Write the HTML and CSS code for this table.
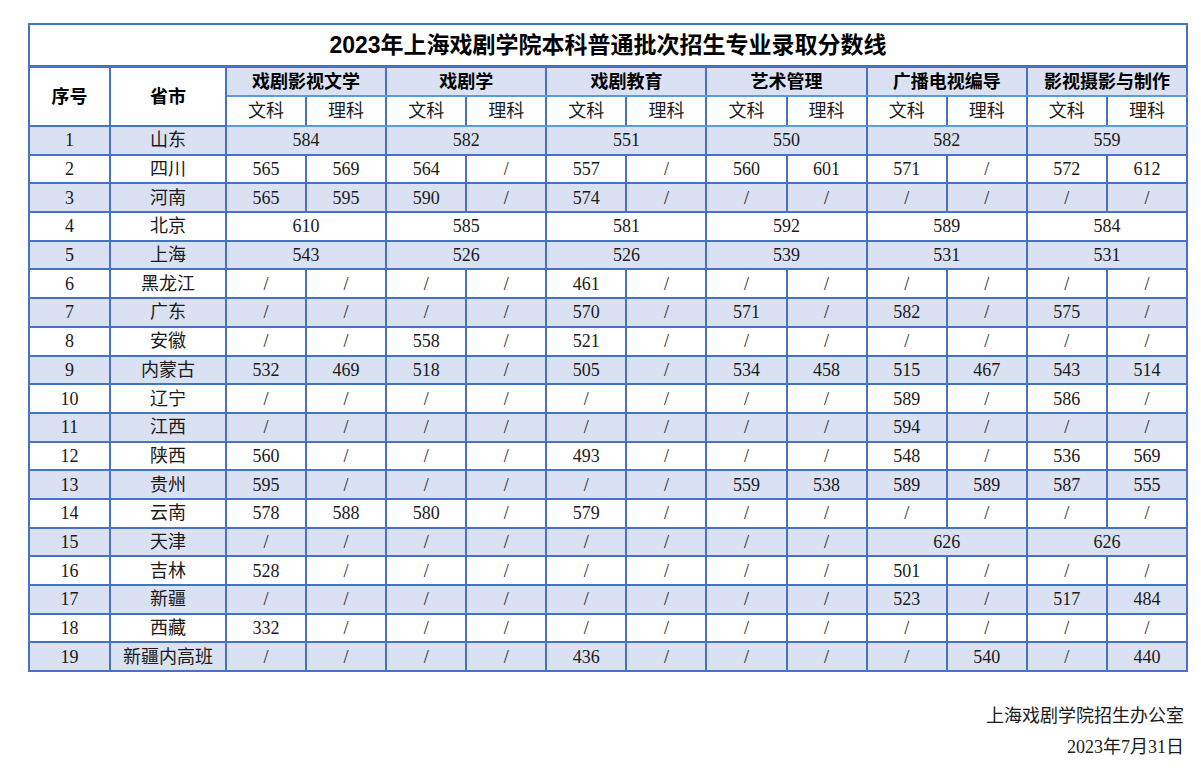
FILE: index.html
```html
<!DOCTYPE html>
<html lang="zh-CN">
<head>
<meta charset="utf-8">
<title>2023年上海戏剧学院本科普通批次招生专业录取分数线</title>
<link rel="stylesheet" href="styles.css">
</head>
<body>
<div class="page">
<table class="scores">
<colgroup>
<col class="c-no"><col class="c-prov">
<col><col><col><col><col><col><col><col><col><col><col><col>
</colgroup>
<thead>
<tr class="title-row"><th colspan="14">2023年上海戏剧学院本科普通批次招生专业录取分数线</th></tr>
<tr class="major-row">
<th rowspan="2" class="key">序号</th><th rowspan="2" class="key">省市</th>
<th colspan="2" class="major">戏剧影视文学</th>
<th colspan="2" class="major">戏剧学</th>
<th colspan="2" class="major">戏剧教育</th>
<th colspan="2" class="major">艺术管理</th>
<th colspan="2" class="major">广播电视编导</th>
<th colspan="2" class="major">影视摄影与制作</th>
</tr>
<tr class="sub-row">
<th>文科</th><th>理科</th><th>文科</th><th>理科</th><th>文科</th><th>理科</th><th>文科</th><th>理科</th><th>文科</th><th>理科</th><th>文科</th><th>理科</th>
</tr>
</thead>
<tbody>
<tr><td>1</td><td>山东</td><td colspan="2">584</td><td colspan="2">582</td><td colspan="2">551</td><td colspan="2">550</td><td colspan="2">582</td><td colspan="2">559</td></tr>
<tr><td>2</td><td>四川</td><td>565</td><td>569</td><td>564</td><td>/</td><td>557</td><td>/</td><td>560</td><td>601</td><td>571</td><td>/</td><td>572</td><td>612</td></tr>
<tr><td>3</td><td>河南</td><td>565</td><td>595</td><td>590</td><td>/</td><td>574</td><td>/</td><td>/</td><td>/</td><td>/</td><td>/</td><td>/</td><td>/</td></tr>
<tr><td>4</td><td>北京</td><td colspan="2">610</td><td colspan="2">585</td><td colspan="2">581</td><td colspan="2">592</td><td colspan="2">589</td><td colspan="2">584</td></tr>
<tr><td>5</td><td>上海</td><td colspan="2">543</td><td colspan="2">526</td><td colspan="2">526</td><td colspan="2">539</td><td colspan="2">531</td><td colspan="2">531</td></tr>
<tr><td>6</td><td>黑龙江</td><td>/</td><td>/</td><td>/</td><td>/</td><td>461</td><td>/</td><td>/</td><td>/</td><td>/</td><td>/</td><td>/</td><td>/</td></tr>
<tr><td>7</td><td>广东</td><td>/</td><td>/</td><td>/</td><td>/</td><td>570</td><td>/</td><td>571</td><td>/</td><td>582</td><td>/</td><td>575</td><td>/</td></tr>
<tr><td>8</td><td>安徽</td><td>/</td><td>/</td><td>558</td><td>/</td><td>521</td><td>/</td><td>/</td><td>/</td><td>/</td><td>/</td><td>/</td><td>/</td></tr>
<tr><td>9</td><td>内蒙古</td><td>532</td><td>469</td><td>518</td><td>/</td><td>505</td><td>/</td><td>534</td><td>458</td><td>515</td><td>467</td><td>543</td><td>514</td></tr>
<tr><td>10</td><td>辽宁</td><td>/</td><td>/</td><td>/</td><td>/</td><td>/</td><td>/</td><td>/</td><td>/</td><td>589</td><td>/</td><td>586</td><td>/</td></tr>
<tr><td>11</td><td>江西</td><td>/</td><td>/</td><td>/</td><td>/</td><td>/</td><td>/</td><td>/</td><td>/</td><td>594</td><td>/</td><td>/</td><td>/</td></tr>
<tr><td>12</td><td>陕西</td><td>560</td><td>/</td><td>/</td><td>/</td><td>493</td><td>/</td><td>/</td><td>/</td><td>548</td><td>/</td><td>536</td><td>569</td></tr>
<tr><td>13</td><td>贵州</td><td>595</td><td>/</td><td>/</td><td>/</td><td>/</td><td>/</td><td>559</td><td>538</td><td>589</td><td>589</td><td>587</td><td>555</td></tr>
<tr><td>14</td><td>云南</td><td>578</td><td>588</td><td>580</td><td>/</td><td>579</td><td>/</td><td>/</td><td>/</td><td>/</td><td>/</td><td>/</td><td>/</td></tr>
<tr><td>15</td><td>天津</td><td>/</td><td>/</td><td>/</td><td>/</td><td>/</td><td>/</td><td>/</td><td>/</td><td colspan="2">626</td><td colspan="2">626</td></tr>
<tr><td>16</td><td>吉林</td><td>528</td><td>/</td><td>/</td><td>/</td><td>/</td><td>/</td><td>/</td><td>/</td><td>501</td><td>/</td><td>/</td><td>/</td></tr>
<tr><td>17</td><td>新疆</td><td>/</td><td>/</td><td>/</td><td>/</td><td>/</td><td>/</td><td>/</td><td>/</td><td>523</td><td>/</td><td>517</td><td>484</td></tr>
<tr><td>18</td><td>西藏</td><td>332</td><td>/</td><td>/</td><td>/</td><td>/</td><td>/</td><td>/</td><td>/</td><td>/</td><td>/</td><td>/</td><td>/</td></tr>
<tr><td>19</td><td>新疆内高班</td><td>/</td><td>/</td><td>/</td><td>/</td><td>436</td><td>/</td><td>/</td><td>/</td><td>/</td><td>540</td><td>/</td><td>440</td></tr>
</tbody>
</table>
<div class="footer">
<div class="footer-line">上海戏剧学院招生办公室</div>
<div class="footer-line">2023年7月31日</div>
</div>
</div>
</body>
</html>
```

FILE: styles.css
```css
html, body {
  margin: 0;
  padding: 0;
  background: #ffffff;
}

body {
  font-family: "Liberation Serif", "Noto Sans CJK SC", serif;
  color: #1a1a1a;
}

.page {
  padding: 23px 0 0 28px;
  width: 1160px;
}

.scores {
  border-collapse: collapse;
  table-layout: fixed;
  width: 1160px;
}

.c-no { width: 81px; }
.c-prov { width: 116px; }

.scores th,
.scores td {
  border: 2px solid #4472c4;
  text-align: center;
  vertical-align: middle;
  padding: 0;
  font-size: 18px;
  font-weight: 400;
  line-height: 20px;
  white-space: nowrap;
  overflow: hidden;
}

.title-row th {
  height: 40px;
  border-bottom-width: 3px;
  font-family: "Liberation Sans", "Noto Sans CJK SC", sans-serif;
  font-weight: 700;
  font-size: 23px;
  color: #000;
}

.major-row th {
  height: 27px;
}

.key,
.major {
  font-family: "Liberation Sans", "Noto Sans CJK SC", sans-serif;
  font-weight: 700 !important;
  color: #000;
}

.major {
  background: #d9e1f2;
  border-bottom-color: #5b9bd5 !important;
}

.sub-row th {
  height: 28px;
  border-bottom-color: #5b9bd5;
}

.scores tbody td {
  height: 26.7px;
}

.scores tbody tr:nth-child(odd) td {
  background: #d9e1f2;
}

.footer {
  width: 1156px;
  margin-top: 29px;
  text-align: right;
  font-size: 18px;
  color: #1a1a1a;
}

.footer-line {
  line-height: 31px;
}
```
